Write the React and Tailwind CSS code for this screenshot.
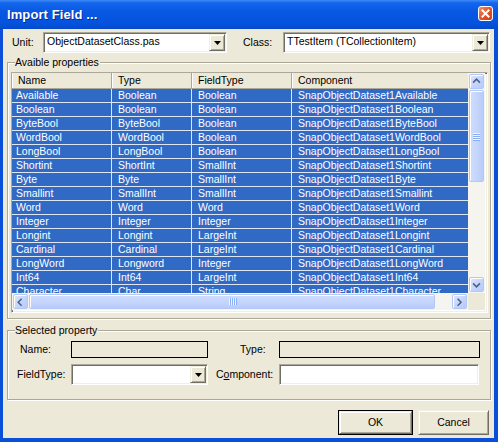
import React from "react";

const sunken =
  "border border-t-[#aca899] border-l-[#aca899] border-b-white border-r-white shadow-[inset_1px_1px_0_#716f64,inset_-1px_-1px_0_#f1efe2]";
const raised =
  "border border-t-[#f1efe2] border-l-[#f1efe2] border-b-[#716f64] border-r-[#716f64] shadow-[inset_1px_1px_0_#fff,inset_-1px_-1px_0_#aca899]";

const rows = [
  ["Available", "Boolean", "Boolean", "SnapObjectDataset1Available"],
  ["Boolean", "Boolean", "Boolean", "SnapObjectDataset1Boolean"],
  ["ByteBool", "ByteBool", "Boolean", "SnapObjectDataset1ByteBool"],
  ["WordBool", "WordBool", "Boolean", "SnapObjectDataset1WordBool"],
  ["LongBool", "LongBool", "Boolean", "SnapObjectDataset1LongBool"],
  ["Shortint", "ShortInt", "SmallInt", "SnapObjectDataset1Shortint"],
  ["Byte", "Byte", "SmallInt", "SnapObjectDataset1Byte"],
  ["Smallint", "SmallInt", "SmallInt", "SnapObjectDataset1Smallint"],
  ["Word", "Word", "Word", "SnapObjectDataset1Word"],
  ["Integer", "Integer", "Integer", "SnapObjectDataset1Integer"],
  ["Longint", "Longint", "LargeInt", "SnapObjectDataset1Longint"],
  ["Cardinal", "Cardinal", "LargeInt", "SnapObjectDataset1Cardinal"],
  ["LongWord", "Longword", "Integer", "SnapObjectDataset1LongWord"],
  ["Int64", "Int64", "LargeInt", "SnapObjectDataset1Int64"],
  ["Character", "Char", "String", "SnapObjectDataset1Character"],
];

function DownTri() {
  return (
    <svg width="7" height="4" viewBox="0 0 7 4">
      <polygon points="0,0 7,0 3.5,4" fill="#000" />
    </svg>
  );
}

function Combo({ className, text }) {
  return (
    <div className={`flex h-[21px] bg-white ${sunken} ${className}`}>
      <div className="flex-1 pl-[3px] leading-[17px] text-black whitespace-nowrap overflow-hidden">
        {text}
      </div>
      <div className={`w-[16px] h-[17px] mt-[1px] mr-[1px] bg-[#ece9d8] flex items-center justify-center ${raised}`}>
        <DownTri />
      </div>
    </div>
  );
}

function Arrow({ dir }) {
  const pts = {
    up: "4,9 8.5,4.5 13,9",
    down: "4,6 8.5,10.5 13,6",
    left: "10,4 5.5,8.5 10,13",
    right: "6,4 10.5,8.5 6,13",
  }[dir];
  return (
    <svg width="17" height="15" viewBox="0 0 17 15" className="block">
      <polyline points={pts} fill="none" stroke="#4d6185" strokeWidth="2" />
    </svg>
  );
}

function SBtn({ dir }) {
  return (
    <div className="w-[17px] h-[17px] p-[1px] shrink-0">
      <div className="w-full h-full rounded-[2px] border border-[#b4c8f6] bg-[linear-gradient(135deg,#dce6fd,#c2d3fc_60%,#b6cafa)] shadow-[inset_1px_1px_0_#fff] flex items-center justify-center overflow-hidden">
        <Arrow dir={dir} />
      </div>
    </div>
  );
}

function Group({ className, title, children }) {
  return (
    <div
      className={`relative border border-[#aca899] shadow-[inset_1px_1px_0_#fff,1px_1px_0_#fff] ${className}`}
    >
      <span className="absolute left-[7px] top-[-8px] bg-[#ece9d8] pr-[1px] leading-[14px] text-black">
        {title}
      </span>
      {children}
    </div>
  );
}

function Btn({ children, def, className }) {
  return (
    <div className={`h-[25px] ${def ? "border border-black" : ""} ${className}`}>
      <div className={`w-full h-full bg-[#ece9d8] flex items-center justify-center text-black ${raised}`}>
        {children}
      </div>
    </div>
  );
}

export default function App() {
  return (
    <div className="w-[498px] h-[442px] bg-[#0a4fd8] flex flex-col font-['Liberation_Sans',Arial,sans-serif] text-[10.5px] select-none overflow-hidden">
      {/* Title bar */}
      <div className="h-[29px] shrink-0 flex items-center justify-between pl-[7px] pr-[5px] bg-[linear-gradient(180deg,#3f8cf6_0%,#1466ec_10%,#0858e4_40%,#0453de_80%,#0649c9_100%)]">
        <span className="text-white font-bold text-[13px] [text-shadow:1px_1px_0_#0a2a8a] tracking-[0.1px]">
          Import Field ...
        </span>
        <div className="w-[15px] h-[15px] mt-[-2px] rounded-[3px] border border-white bg-[linear-gradient(135deg,#f0906a,#e2542a_50%,#c8401a)] flex items-center justify-center">
          <svg width="9" height="9" viewBox="0 0 9 9">
            <path d="M1.5 1.5 L7.5 7.5 M7.5 1.5 L1.5 7.5" stroke="#fff" strokeWidth="2" strokeLinecap="square" />
          </svg>
        </div>
      </div>

      {/* Body */}
      <div className="ml-[3px] mr-[4px] mb-[4px] flex-1 bg-[#ece9d8] flex flex-col text-black">
        {/* Unit / Class row */}
        <div className="flex items-center mt-[3px] h-[21px]">
          <span className="w-[40px] pl-[9px]">Unit:</span>
          <Combo className="w-[184px]" text="ObjectDatasetClass.pas" />
          <span className="ml-[16px] w-[40px]">Class:</span>
          <Combo className="w-[207px]" text="TTestItem (TCollectionItem)" />
        </div>

        {/* Available properties */}
        <Group className="ml-[4px] w-[484px] h-[257px] mt-[9px]" title="Avaible properties">
          <div className={`ml-[3px] mt-[9px] w-[477px] h-[241px] bg-white ${sunken} flex flex-col`}>
            <div className="flex h-[220px]">
              {/* columns */}
              <div className="w-[456px] h-[220px] overflow-hidden flex flex-col">
                <div className="flex h-[16px] shrink-0 bg-[#ece9d8] border-b border-[#aca899]">
                  {[
                    ["Name", "w-[100px]"],
                    ["Type", "w-[80px]"],
                    ["FieldType", "w-[100px]"],
                    ["Component", "w-[200px]"],
                  ].map(([t, w]) => (
                    <div
                      key={t}
                      className={`${w} shrink-0 h-full pl-[6px] leading-[15px] border-r border-r-[#aca899] shadow-[inset_1px_0_0_#fff]`}
                    >
                      {t}
                    </div>
                  ))}
                </div>
                {rows.map((r, i) => (
                  <div key={i} className="flex h-[14px] shrink-0 text-white">
                    <div className="w-[100px] shrink-0 pl-[4px] leading-[13px] bg-[#316ac5] border-r border-b border-[#dfe6f3] whitespace-nowrap overflow-hidden">
                      {r[0]}
                    </div>
                    <div className="w-[80px] shrink-0 pl-[6px] leading-[13px] bg-[#316ac5] border-r border-b border-[#dfe6f3] whitespace-nowrap overflow-hidden">
                      {r[1]}
                    </div>
                    <div className="w-[100px] shrink-0 pl-[6px] leading-[13px] bg-[#316ac5] border-r border-b border-[#dfe6f3] whitespace-nowrap overflow-hidden">
                      {r[2]}
                    </div>
                    <div className="w-[200px] shrink-0 pl-[6px] leading-[13px] bg-[#316ac5] border-r border-b border-[#dfe6f3] whitespace-nowrap overflow-hidden">
                      {r[3]}
                    </div>
                  </div>
                ))}
              </div>
              {/* vertical scrollbar */}
              <div className="w-[17px] h-[220px] bg-[#f5f4ef] flex flex-col">
                <SBtn dir="up" />
                <div className="h-[92px] px-[1px] shrink-0">
                  <div className="w-full h-full rounded-[2px] border border-[#b4c8f6] bg-[linear-gradient(90deg,#cfdcfd,#c3d4fc_60%,#b8cbfa)] shadow-[inset_1px_1px_0_#fff] flex flex-col items-center justify-center gap-[1px]">
                    {[0, 1, 2, 3].map((k) => (
                      <div key={k} className="w-[7px] h-[1px] bg-[#eef3fe] shadow-[0_1px_0_#8cb0f8]" />
                    ))}
                  </div>
                </div>
                <div className="flex-1" />
                <SBtn dir="down" />
              </div>
            </div>
            <div className="flex h-[17px]">
              <div className="w-[456px] h-[17px] bg-[#f5f4ef] flex">
                <SBtn dir="left" />
                <div className="w-[406px] py-[1px] shrink-0">
                  <div className="w-full h-full rounded-[2px] border border-[#b4c8f6] bg-[linear-gradient(180deg,#cfdcfd,#c3d4fc_60%,#b8cbfa)] shadow-[inset_1px_1px_0_#fff] flex items-center justify-center gap-[1px]">
                    {[0, 1, 2, 3].map((k) => (
                      <div key={k} className="w-[1px] h-[7px] bg-[#eef3fe] shadow-[1px_0_0_#8cb0f8]" />
                    ))}
                  </div>
                </div>
                <div className="flex-1" />
                <SBtn dir="right" />
              </div>
              <div className="w-[17px] h-[17px] bg-[#ece9d8]" />
            </div>
          </div>
        </Group>

        {/* Selected property */}
        <Group className="ml-[4px] w-[484px] h-[70px] mt-[11px]" title="Selected property">
          <div className="flex items-center mt-[10px] h-[17px]">
            <span className="w-[63px] pl-[12px]">Name:</span>
            <div className="w-[137px] h-[17px] border border-black bg-[#ece9d8]" />
            <span className="w-[71px] pl-[32px]">Type:</span>
            <div className="w-[201px] h-[17px] border border-black bg-[#ece9d8]" />
          </div>
          <div className="flex items-center mt-[6px] h-[21px]">
            <span className="w-[63px] pl-[9px]">FieldType:</span>
            <Combo className="w-[137px]" text="" />
            <span className="w-[71px] pl-[8px]">
              C<span className="underline">o</span>mponent:
            </span>
            <div className={`w-[200px] h-[21px] bg-white ${sunken}`} />
          </div>
        </Group>

        {/* Buttons */}
        <div className="flex mt-[10px] pl-[335px] gap-[5px]">
          <Btn def className="w-[75px]">OK</Btn>
          <Btn className="w-[71px]">Cancel</Btn>
        </div>
      </div>
    </div>
  );
}
